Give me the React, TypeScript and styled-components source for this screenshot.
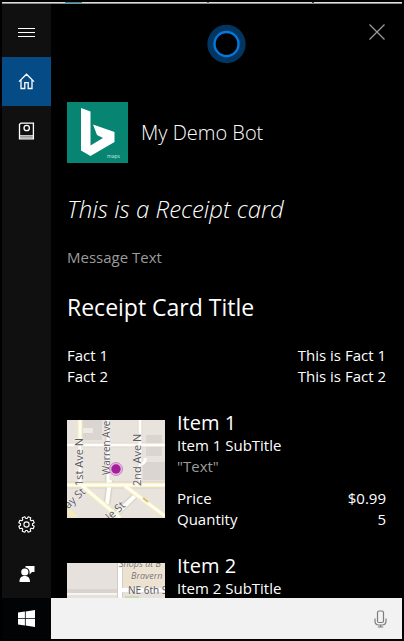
import React from "react";
import styled, { createGlobalStyle } from "styled-components";

const GlobalStyle = createGlobalStyle`
  * { box-sizing: border-box; }
  body {
    margin: 0;
    background: #000;
    color: #fff;
    font-family: "Open Sans", "Noto Sans", sans-serif;
    font-size: 15px;
    line-height: 21px;
  }
  button { font: inherit; color: inherit; border: 0; padding: 0; background: none; }
  h1, h2, h3, p, dl, dt, dd, ul { margin: 0; padding: 0; font-weight: 400; }
  svg { display: block; }
`;

const Shell = styled.div`
  height: 100vh;
  padding: 2px;
  display: flex;
  flex-direction: column;
  background: #000;
`;

const WindowEdge = styled.div`
  flex: none;
  height: 2px;
  border-bottom: 1px solid #8c8c8c;
  background: linear-gradient(
    90deg,
    #dcdcdc 63px, #2c8ca8 63px, #2c8ca8 80px, #dcdcdc 80px,
    #dcdcdc 205px, #a86a3c 205px, #a86a3c 207px, #dcdcdc 207px,
    #dcdcdc 310px, #5a3a2c 310px, #5a3a2c 312px, #e0e0e0 312px
  );
`;

const Panel = styled.div`
  flex: 1;
  min-height: 0;
  display: flex;
`;

const Sidebar = styled.nav`
  flex: none;
  width: 49px;
  display: flex;
  flex-direction: column;
  background: #101010;
`;

const NavButton = styled.button<{ $active?: boolean; $tall?: boolean }>`
  height: ${(p) => (p.$tall ? 53 : 49)}px;
  display: flex;
  align-items: center;
  justify-content: center;
  background: ${(p) => (p.$active ? "#054b86" : "transparent")};
  padding-top: ${(p) => (p.$tall ? 4 : 0)}px;
`;

const Spacer = styled.div`
  flex: 1;
`;

const Main = styled.main`
  flex: 1;
  min-width: 0;
  overflow: hidden;
  padding: 0 16px;
`;

const TopBar = styled.header`
  display: grid;
  grid-template-columns: 1fr auto 1fr;
  padding-top: 20px;
  height: 98px;
  align-items: start;
`;

const CloseButton = styled.button`
  grid-column: 3;
  justify-self: end;
`;

const Ring = styled.div`
  grid-column: 2;
`;

const Bot = styled.div`
  display: flex;
  align-items: center;
  gap: 13px;
`;

const BotName = styled.h1`
  font-size: 20px;
  line-height: 28px;
  font-weight: 300;
`;

const Spoken = styled.p`
  margin-top: 30px;
  font-size: 24px;
  line-height: 32px;
  font-style: italic;
  font-weight: 300;
`;

const Message = styled.p`
  margin-top: 22px;
  color: #9b9b9b;
`;

const CardTitle = styled.h2`
  margin-top: 23px;
  font-size: 23px;
  line-height: 32px;
`;

const Facts = styled.dl<{ $gap: number }>`
  margin-top: ${(p) => p.$gap}px;
`;

const FactRow = styled.div`
  display: flex;
  justify-content: space-between;
`;

const Items = styled.ul`
  margin-top: 24px;
  display: flex;
  flex-direction: column;
  gap: 24px;
  list-style: none;
`;

const Item = styled.li`
  display: flex;
  gap: 12px;
`;

const MapFrame = styled.div`
  flex: none;
  width: 98px;
  height: 98px;
  margin-top: 9px;
`;

const ItemBody = styled.div`
  flex: 1;
  min-width: 0;
`;

const ItemTitle = styled.h3`
  font-size: 20px;
  line-height: 24px;
`;

const Quote = styled.p`
  color: #9b9b9b;
`;

const Taskbar = styled.footer`
  flex: none;
  height: 41px;
  display: flex;
`;

const StartButton = styled.button`
  width: 49px;
  display: flex;
  align-items: center;
  justify-content: center;
  background: #020305;
`;

const SearchBox = styled.div`
  flex: 1;
  min-width: 0;
  display: flex;
  align-items: center;
  background: #f2f2f2;
  padding-right: 15px;
`;

const SearchInput = styled.input`
  flex: 1;
  min-width: 0;
  height: 100%;
  border: 0;
  outline: 0;
  padding: 0 12px;
  background: transparent;
  color: #222;
  font: inherit;
`;

const MenuIcon = () => (
  <svg width="17" height="11" viewBox="0 0 17 11" stroke="#fff">
    <path d="M0 1.5h17M0 5.5h17M0 9.5h17" />
  </svg>
);

const HomeIcon = () => (
  <svg width="17" height="17" viewBox="0 0 17 17" fill="none" stroke="#fff" strokeWidth="1.3">
    <path d="M1 8.6 8.5 1.2 16 8.6M3 7v8.5h3.8V9.6h3.4v5.9H14V7" />
  </svg>
);

const NotebookIcon = () => (
  <svg width="17" height="18" viewBox="0 0 17 18" fill="none" stroke="#fff" strokeWidth="1.3">
    <path d="M1.5 2.3 3 1.2h12.4v15.6H1.5zM1.5 13.8h13.9" />
    <circle cx="8.7" cy="6" r="2.7" />
    <path d="M2 15.3h13" stroke="#bbb" />
  </svg>
);

const gearPath = (() => {
  const points: string[] = [];
  for (let i = 0; i < 8; i++) {
    [[-16, 6], [-10, 7.9], [10, 7.9], [16, 6]].forEach(([offset, r]) => {
      const a = ((i * 45 + 22.5 + offset) * Math.PI) / 180;
      points.push(`${(8.5 + r * Math.cos(a)).toFixed(2)} ${(8.5 + r * Math.sin(a)).toFixed(2)}`);
    });
  }
  return `M${points.join("L")}Z`;
})();

const GearIcon = () => (
  <svg width="17" height="17" viewBox="0 0 17 17" fill="none" stroke="#fff" strokeWidth="1.1" strokeLinejoin="round">
    <path d={gearPath} />
    <circle cx="8.5" cy="8.5" r="2.6" />
  </svg>
);

const FeedbackIcon = () => (
  <svg width="16" height="18" viewBox="0 0 16 18" fill="#fff">
    <circle cx="5.8" cy="7" r="3.6" />
    <path d="M0.5 17c0-4 1.6-6 5.2-6s5.3 2 5.3 6zM6.5 1H15.5v6H13l-2.4 2.4V7a5 5 0 0 0-4.1-4.5z" />
  </svg>
);

const CloseIcon = () => (
  <svg width="18" height="18" viewBox="0 0 18 18" stroke="#9a9a9a" strokeWidth="1.3">
    <path d="M1.5 0.5l15 15M16.5 0.5l-15 15" />
  </svg>
);

const RingIcon = () => (
  <svg width="39" height="40" viewBox="0 0 39 40" fill="none">
    <circle cx="19.5" cy="20" r="19.2" fill="#023560" />
    <circle cx="19.5" cy="20" r="12" fill="#000" stroke="#0479dc" strokeWidth="2.4" />
  </svg>
);

const BotLogo = () => (
  <svg width="61" height="61" viewBox="0 0 61 61">
    <rect width="61" height="61" fill="#078572" />
    <path fill="#fff" d="M14 6l9.5 3.4v34L36 36l-6-3-4-10.5L47.5 30v10L23.5 54 14 48.5z" />
    <text x="40" y="56" fontSize="5" fill="#c9e8e2">maps</text>
  </svg>
);

const StartIcon = () => (
  <svg width="17" height="17" viewBox="0 0 17 17" fill="#fff">
    <path d="M0 2.5 6.9 1.5V8H0zM7.7 1.4 17 0v8H7.7zM0 8.8h6.9v6.6L0 14.5zM7.7 8.8H17V17l-9.3-1.4z" />
  </svg>
);

const MicIcon = () => (
  <svg width="13" height="18" viewBox="0 0 13 18" fill="none" stroke="#7d7d7d" strokeWidth="1.2">
    <rect x="3.5" y="1" width="6" height="11.5" rx="1.5" />
    <path d="M1 8.5v2.5c0 2.5 1.5 4 4 4h3c2.5 0 4-1.5 4-4V8.5M6.5 15v2M3.8 17h5.4" />
  </svg>
);

const AvenueMap = () => (
  <svg width="98" height="98" viewBox="0 0 98 98">
    <rect width="98" height="98" fill="#e8e3dd" />
    <path fill="#dad5d0" d="M15 0h20v20H15zM79 15h16v21H79zM76 42h22v18H76z" />
    <path fill="#eee9e3" d="M16 8h10v5H16z" />
    <g fill="none" stroke="#dad4ca">
      <path strokeWidth="4.5" d="M0 25h98M40 0v64M73 0v64" />
      <path strokeWidth="7" d="M0 65h98M43 60 40 84M70 74 44 98" />
    </g>
    <g fill="none" stroke="#fffefa">
      <path strokeWidth="3" d="M0 25h98M41 0v64M73 0v64M74 44q5-1 4-6" />
      <path strokeWidth="4" d="M43 60 40 84M71 73 45 98" />
    </g>
    <path fill="none" stroke="#f3ebba" strokeWidth="5" d="M13 0v22M0 65h98M15 66 53 98M0 90l9 8M58 66l40 30" />
    <path fill="none" stroke="#fffdf0" strokeWidth="3" d="M13 0v64L53 98M0 65h98M58 66l40 30" />
    <path stroke="#d7bd75" strokeWidth="2" d="M76 78l5 4" />
    <g fontSize="11" fill="#59595e" stroke="#f5f2ee" strokeWidth="1" paintOrder="stroke">
      <text transform="translate(16 66) rotate(-90)">1st Ave N</text>
      <text fontSize="10" transform="translate(43 55) rotate(-90)">Warren Ave</text>
      <text transform="translate(74 66) rotate(-90)">2nd Ave N</text>
      <text transform="translate(-4 94) rotate(-43)">Bay St</text>
      <text transform="translate(43 101) rotate(-43)">le St</text>
    </g>
    <circle cx="49" cy="49" r="6.5" fill="#e7b4df" stroke="#cf8ac8" />
    <circle cx="49" cy="49" r="4.7" fill="#a3209b" />
  </svg>
);

const ShopsMap = () => (
  <svg width="98" height="98" viewBox="0 0 98 98">
    <rect width="98" height="98" fill="#e6e1dc" />
    <path fill="#ece2cf" d="M56 0h42v24H56z" />
    <path fill="#d8d3cd" d="M0 26h52v4H0z" />
    <path stroke="#f7f5f2" strokeWidth="2" d="M0 31h52" />
    <path stroke="#d3cdc5" strokeWidth="6" d="M53 0v98" />
    <path stroke="#fff" strokeWidth="4" d="M53 0v98M53 27h45" />
    <path fill="#c8dda9" d="M58 33h14v8H58z" />
    <g fontSize="10" fill="#797068" stroke="#f0ebe3" strokeWidth="1" paintOrder="stroke">
      <text x="52" y="4" fontSize="9" fontStyle="italic">Shops at B</text>
      <text x="64" y="16" fontSize="9" fontStyle="italic">Bravern</text>
      <text x="61" y="31" fill="#59595e">NE 6th St</text>
    </g>
  </svg>
);

type Fact = [string, string];

const FactList = ({ facts, gap }: { facts: Fact[]; gap: number }) => (
  <Facts $gap={gap}>
    {facts.map(([name, value]) => (
      <FactRow key={name}>
        <dt>{name}</dt>
        <dd>{value}</dd>
      </FactRow>
    ))}
  </Facts>
);

const items = [
  { n: 1, map: <AvenueMap />, facts: [["Price", "$0.99"], ["Quantity", "5"]] as Fact[] },
  { n: 2, map: <ShopsMap />, facts: [] as Fact[] },
];

export default function App() {
  return (
    <>
      <GlobalStyle />
      <Shell>
        <WindowEdge />
        <Panel>
          <Sidebar>
            <NavButton $tall aria-label="Menu"><MenuIcon /></NavButton>
            <NavButton $active aria-label="Home"><HomeIcon /></NavButton>
            <NavButton aria-label="Notebook"><NotebookIcon /></NavButton>
            <Spacer />
            <NavButton aria-label="Settings"><GearIcon /></NavButton>
            <NavButton aria-label="Feedback"><FeedbackIcon /></NavButton>
          </Sidebar>
          <Main>
            <TopBar>
              <Ring><RingIcon /></Ring>
              <CloseButton aria-label="Close"><CloseIcon /></CloseButton>
            </TopBar>
            <Bot>
              <BotLogo />
              <BotName>My Demo Bot</BotName>
            </Bot>
            <Spoken>This is a Receipt card</Spoken>
            <Message>Message Text</Message>
            <CardTitle>Receipt Card Title</CardTitle>
            <FactList gap={22} facts={[["Fact 1", "This is Fact 1"], ["Fact 2", "This is Fact 2"]]} />
            <Items>
              {items.map(({ n, map, facts }) => (
                <Item key={n}>
                  <MapFrame>{map}</MapFrame>
                  <ItemBody>
                    <ItemTitle>Item {n}</ItemTitle>
                    <p>Item {n} SubTitle</p>
                    {facts.length > 0 && <Quote>"Text"</Quote>}
                    {facts.length > 0 && <FactList gap={11} facts={facts} />}
                  </ItemBody>
                </Item>
              ))}
            </Items>
          </Main>
        </Panel>
        <Taskbar>
          <StartButton aria-label="Start"><StartIcon /></StartButton>
          <SearchBox>
            <SearchInput type="text" aria-label="Search" />
            <button aria-label="Speak"><MicIcon /></button>
          </SearchBox>
        </Taskbar>
      </Shell>
    </>
  );
}
